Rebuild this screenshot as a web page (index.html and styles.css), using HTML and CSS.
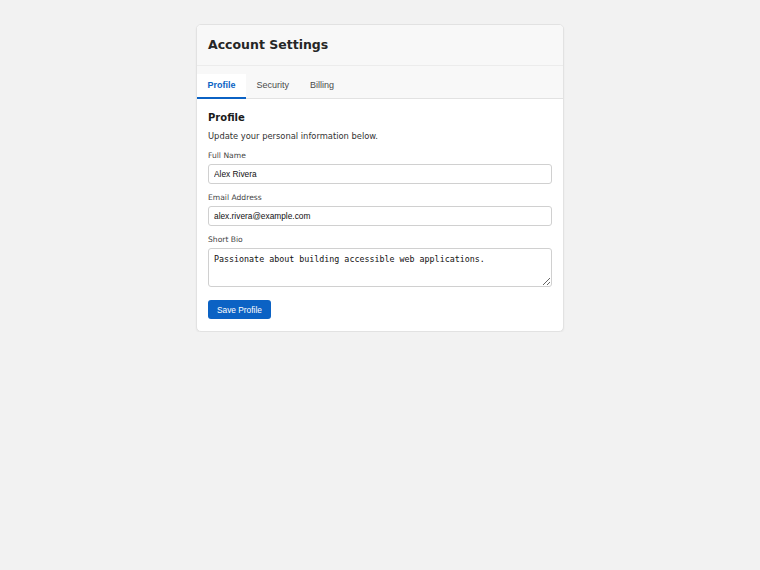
FILE: index.html
```html
<!DOCTYPE html>
<html lang="en">
<head>
<meta charset="utf-8">
<title>Account Settings</title>
<link rel="stylesheet" href="styles.css">
</head>
<body>
<main class="card">
  <header class="card-header">
    <h1 class="title">Account Settings</h1>
  </header>
  <nav class="tabs">
    <button class="tab active">Profile</button>
    <button class="tab">Security</button>
    <button class="tab">Billing</button>
  </nav>
  <section class="panel">
    <h2 class="panel-title">Profile</h2>
    <p class="panel-desc">Update your personal information below.</p>
    <form class="form">
      <div class="field">
        <label class="label" for="name">Full Name</label>
        <input class="input" id="name" type="text" value="Alex Rivera">
      </div>
      <div class="field">
        <label class="label" for="email">Email Address</label>
        <input class="input" id="email" type="email" value="alex.rivera@example.com">
      </div>
      <div class="field">
        <label class="label" for="bio">Short Bio</label>
        <textarea class="textarea" id="bio">Passionate about building accessible web applications.</textarea>
      </div>
      <div class="actions">
        <button type="button" class="btn">Save Profile</button>
      </div>
    </form>
  </section>
</main>
</body>
</html>
```

FILE: styles.css
```css
* { box-sizing: border-box; }
html, body { margin: 0; padding: 0; }
body {
  background: #f2f2f2;
  font-family: "DejaVu Sans", sans-serif;
  color: #222;
  padding-top: 24px;
}
.card {
  width: 368px;
  margin: 0 auto;
  background: #fff;
  border: 1px solid #e2e2e2;
  border-radius: 5px;
  box-shadow: 0 1px 2px rgba(0,0,0,0.05);
  overflow: hidden;
}
.card-header {
  background: #f8f8f8;
  border-bottom: 1px solid #ececec;
  padding: 11px 11px 12px;
}
.title {
  margin: 0;
  font-size: 12.5px;
  font-weight: bold;
  line-height: 17px;
  color: #262626;
}
.tabs {
  display: flex;
  background: #f8f8f8;
  border-bottom: 1px solid #e2e2e2;
  padding-top: 8px;
}
.tab {
  font-family: "Liberation Sans", Arial, sans-serif;
  font-size: 9px;
  line-height: 10px;
  color: #4a4a4a;
  background: transparent;
  border: none;
  border-bottom: 2px solid transparent;
  padding: 6px 10.5px 7px;
  margin-bottom: -1px;
  cursor: pointer;
}
.tab.active {
  background: #fff;
  color: #0b62c4;
  font-weight: bold;
  border-bottom-color: #0b62c4;
}
.panel {
  padding: 13px 11px 12px;
}
.panel-title {
  margin: 0;
  font-size: 10px;
  font-weight: bold;
  line-height: 12px;
  color: #1a1a1a;
}
.panel-desc {
  margin: 7px 0 0;
  font-size: 8.33px;
  line-height: 10px;
  color: #333;
}
.form {
  margin-top: 10px;
  display: flex;
  flex-direction: column;
  gap: 9px;
}
.field {
  display: flex;
  flex-direction: column;
  gap: 3px;
}
.label {
  font-size: 7.6px;
  line-height: 10px;
  color: #444;
}
.input, .textarea {
  width: 100%;
  border: 1px solid #d0d0d0;
  border-radius: 3px;
  background: #fff;
  color: #111;
  padding: 0 5px;
}
.input {
  height: 20px;
  font-family: "Liberation Sans", Arial, sans-serif;
  font-size: 8.33px;
}
.textarea {
  height: 39px;
  padding: 5px 5px 4px;
  font-family: "DejaVu Sans Mono", monospace;
  font-size: 8.33px;
  line-height: 11px;
  resize: vertical;
  display: block;
}
.actions { margin-top: 4px; }
.btn {
  font-family: "Liberation Sans", Arial, sans-serif;
  font-size: 8.33px;
  color: #fff;
  background: #0b62c4;
  border: none;
  border-radius: 3px;
  height: 19px;
  padding: 0 9px;
  display: block;
}
```
